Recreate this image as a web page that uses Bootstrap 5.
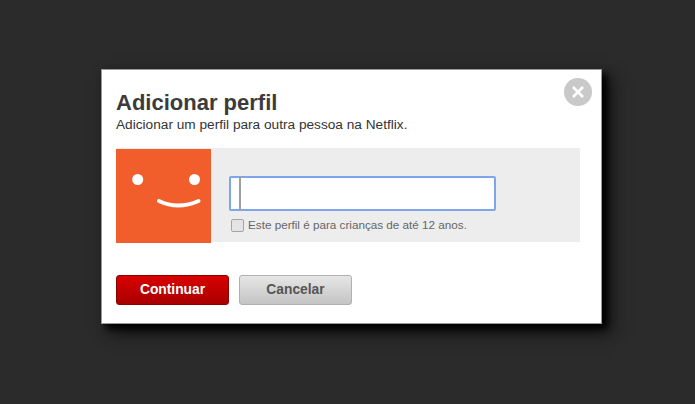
<!DOCTYPE html>
<html lang="pt">
<head>
<meta charset="utf-8">
<title>Adicionar perfil</title>
<link rel="stylesheet" href="https://cdn.jsdelivr.net/npm/bootstrap@5.3.0/dist/css/bootstrap.min.css">
<style>
html,body{height:100%;margin:0;background:#2b2b2b;font-family:"Liberation Sans",Arial,sans-serif;overflow:hidden}
.backdrop{padding:69px 0 0 101px;height:404px}
.dialog{position:relative;width:501px;height:255px;background:#fff;box-shadow:0 0 0 1px #999 inset,5px 5px 7px #000,9px 9px 16px #111;padding:20px 22px 0 15px}
.dlg-title{font-size:22px;line-height:28px;font-weight:700;color:#3b3b3b;margin:0}
.dlg-sub{font-size:13.67px;line-height:16px;color:#333;margin:0 0 15px}
.closer{position:absolute;top:9px;right:10px;width:28px;height:28px;border-radius:50%;background:#c9c9c9;border:0;padding:0;display:flex;align-items:center;justify-content:center}
.panel{background:#ededed;height:94px;width:464px}
.avatar{width:95px;height:94px;margin-top:1px;background:#f15d2b;flex:none}
.form-zone{padding:28px 0 0 18px}
.field-wrap{position:relative;width:267px;height:35px}
.name-input{width:267px;height:35px;border:2px solid #7ea6ec;border-radius:2px;background:#fff;padding:0;box-shadow:none;display:block}
.caret-bar{position:absolute;left:10px;top:0;width:2px;height:35px;background:#a0a0a0}
.kid-row{margin:7px 0 0 2px;font-size:11.7px;line-height:14px;color:#666;gap:4px}
.kid-box{width:13px;height:13px;border:1px solid #a5a5a5;border-radius:2px;background:#e4e4e4;flex:none}
.actions{margin-top:33px;gap:10px}
.act{width:113px;height:30px;border-radius:3px;font-size:13.8px;font-weight:700;padding:0;line-height:28px}
.act-red{background:linear-gradient(#d90000,#a80000);border:1px solid #8c0000;color:#fff}
.act-gray{background:linear-gradient(#e6e6e6,#c4c4c4);border:1px solid #b0b0b0;color:#555}
</style>
</head>
<body>
<div class="backdrop">
  <div class="dialog">
    <button class="closer" type="button" aria-label="Fechar">
      <svg width="14" height="14" viewBox="0 0 14 14"><path d="M2 2 12 12M12 2 2 12" stroke="#fff" stroke-width="2.6" fill="none"/></svg>
    </button>
    <h1 class="dlg-title">Adicionar perfil</h1>
    <p class="dlg-sub">Adicionar um perfil para outra pessoa na Netflix.</p>
    <div class="panel d-flex">
      <div class="avatar">
        <svg width="95" height="94" viewBox="0 0 95 94">
          <circle cx="21.7" cy="30.5" r="5.500" fill="#fff"/>
          <circle cx="78.5" cy="30.5" r="5.500" fill="#fff"/>
          <path d="M43 52Q62 61 82.500 52" stroke="#fff" stroke-width="4" stroke-linecap="round" fill="none"/>
        </svg>
      </div>
      <div class="form-zone">
        <div class="field-wrap">
          <input class="name-input" type="text" aria-label="Nome">
          <div class="caret-bar"></div>
        </div>
        <div class="kid-row d-flex align-items-center">
          <span class="kid-box"></span>
          <span>Este perfil é para crianças de até 12 anos.</span>
        </div>
      </div>
    </div>
    <div class="actions d-flex">
      <button class="btn act act-red" type="button">Continuar</button>
      <button class="btn act act-gray" type="button">Cancelar</button>
    </div>
  </div>
</div>
<script src="https://cdn.jsdelivr.net/npm/bootstrap@5.3.0/dist/js/bootstrap.bundle.min.js"></script>
</body>
</html>
